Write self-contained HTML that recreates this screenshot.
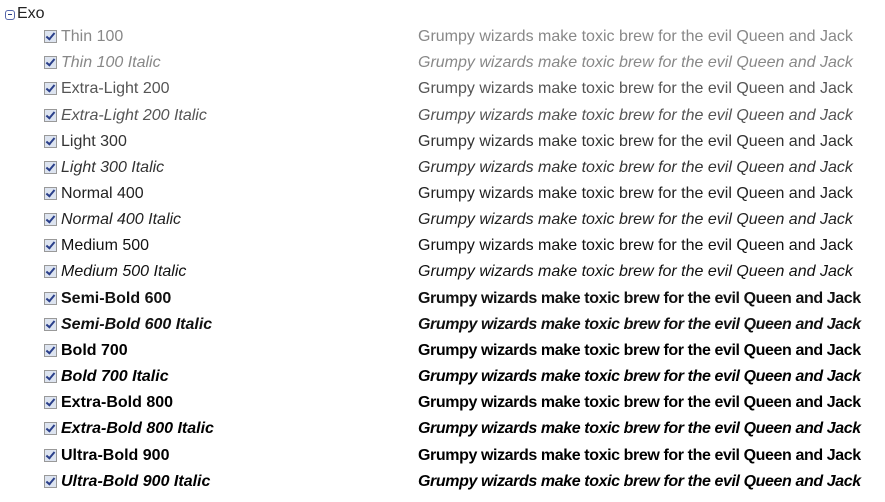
<!DOCTYPE html>
<html><head><style>
body{margin:0;width:885px;height:502px;background:#fff;font-family:"Liberation Sans",sans-serif;overflow:hidden;position:relative}
.r{position:absolute;left:0;height:20px;font-size:16px;line-height:20px;white-space:nowrap}
.cb{position:absolute;left:44px;top:3px;width:11px;height:11px;border:1px solid #999;background:#dde4f0}
.cb:after{content:"";position:absolute;left:3px;top:0px;width:3px;height:7px;border:solid #2a3f8a;border-width:0 2px 2px 0;transform:rotate(40deg)}
.l{position:absolute;left:61px}
.s{position:absolute;left:418px}
.b .s{letter-spacing:-0.4px}
.i{font-style:italic}
</style></head><body>
<div style="position:absolute;left:5px;top:10px;width:8px;height:8px;border:1px solid #5566aa;border-radius:3px"><div style="position:absolute;left:2px;top:3px;width:4px;height:1px;background:#2a3f8a"></div></div>
<div style="position:absolute;left:17px;top:4px;font-size:16px;line-height:20px;color:#222">Exo</div>
<div class="r" style="top:27px;color:#888"><span class="cb"></span><span class="l">Thin 100</span><span class="s">Grumpy wizards make toxic brew for the evil Queen and Jack</span></div>
<div class="r i" style="top:53px;color:#888"><span class="cb"></span><span class="l">Thin 100 Italic</span><span class="s">Grumpy wizards make toxic brew for the evil Queen and Jack</span></div>
<div class="r" style="top:79px;color:#555"><span class="cb"></span><span class="l">Extra-Light 200</span><span class="s">Grumpy wizards make toxic brew for the evil Queen and Jack</span></div>
<div class="r i" style="top:106px;color:#555"><span class="cb"></span><span class="l">Extra-Light 200 Italic</span><span class="s">Grumpy wizards make toxic brew for the evil Queen and Jack</span></div>
<div class="r" style="top:132px;color:#333"><span class="cb"></span><span class="l">Light 300</span><span class="s">Grumpy wizards make toxic brew for the evil Queen and Jack</span></div>
<div class="r i" style="top:158px;color:#333"><span class="cb"></span><span class="l">Light 300 Italic</span><span class="s">Grumpy wizards make toxic brew for the evil Queen and Jack</span></div>
<div class="r" style="top:184px;color:#222"><span class="cb"></span><span class="l">Normal 400</span><span class="s">Grumpy wizards make toxic brew for the evil Queen and Jack</span></div>
<div class="r i" style="top:210px;color:#222"><span class="cb"></span><span class="l">Normal 400 Italic</span><span class="s">Grumpy wizards make toxic brew for the evil Queen and Jack</span></div>
<div class="r" style="top:236px;color:#111"><span class="cb"></span><span class="l">Medium 500</span><span class="s">Grumpy wizards make toxic brew for the evil Queen and Jack</span></div>
<div class="r i" style="top:262px;color:#111"><span class="cb"></span><span class="l">Medium 500 Italic</span><span class="s">Grumpy wizards make toxic brew for the evil Queen and Jack</span></div>
<div class="r b" style="top:289px;color:#111;font-weight:700"><span class="cb"></span><span class="l">Semi-Bold 600</span><span class="s">Grumpy wizards make toxic brew for the evil Queen and Jack</span></div>
<div class="r i b" style="top:315px;color:#111;font-weight:700"><span class="cb"></span><span class="l">Semi-Bold 600 Italic</span><span class="s">Grumpy wizards make toxic brew for the evil Queen and Jack</span></div>
<div class="r b" style="top:341px;color:#000;font-weight:700"><span class="cb"></span><span class="l">Bold 700</span><span class="s">Grumpy wizards make toxic brew for the evil Queen and Jack</span></div>
<div class="r i b" style="top:367px;color:#000;font-weight:700"><span class="cb"></span><span class="l">Bold 700 Italic</span><span class="s">Grumpy wizards make toxic brew for the evil Queen and Jack</span></div>
<div class="r b" style="top:393px;color:#000;font-weight:700"><span class="cb"></span><span class="l">Extra-Bold 800</span><span class="s">Grumpy wizards make toxic brew for the evil Queen and Jack</span></div>
<div class="r i b" style="top:419px;color:#000;font-weight:700"><span class="cb"></span><span class="l">Extra-Bold 800 Italic</span><span class="s">Grumpy wizards make toxic brew for the evil Queen and Jack</span></div>
<div class="r b" style="top:446px;color:#000;font-weight:700"><span class="cb"></span><span class="l">Ultra-Bold 900</span><span class="s">Grumpy wizards make toxic brew for the evil Queen and Jack</span></div>
<div class="r i b" style="top:472px;color:#000;font-weight:700"><span class="cb"></span><span class="l">Ultra-Bold 900 Italic</span><span class="s">Grumpy wizards make toxic brew for the evil Queen and Jack</span></div>
</body></html>
